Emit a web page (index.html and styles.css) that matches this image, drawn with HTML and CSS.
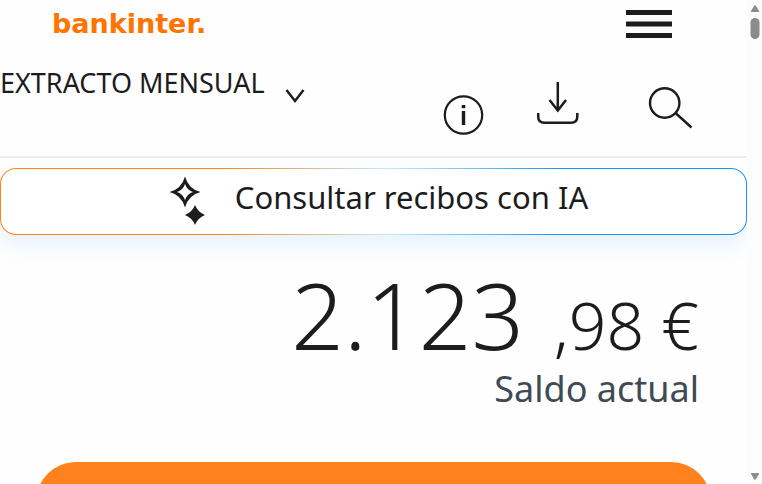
FILE: index.html
```html
<!DOCTYPE html>
<html lang="es">
<head>
<meta charset="utf-8">
<meta name="viewport" content="width=device-width, initial-scale=1">
<title>bankinter</title>
<link rel="stylesheet" href="styles.css">
</head>
<body>
<div class="page">
  <header class="topbar">
    <a class="logo" href="#">bankinter.</a>
    <button class="icon-button" type="button" aria-label="Menú">
      <svg width="46" height="28" viewBox="0 0 46 28" fill="#1b1c1e"><path d="M0 0h46v5H0zM0 11.5h46v5H0zM0 23h46v5H0z"/></svg>
    </button>
  </header>
  <nav class="toolbar">
    <button class="statement" type="button">
      <span>EXTRACTO MENSUAL</span>
      <svg class="chevron" width="20" height="14" viewBox="0 0 20 14" fill="none" stroke="#1b1c1e" stroke-width="2.4"><path d="M1.5 1 10 12 18.5 1"/></svg>
    </button>
    <div class="actions">
      <button class="icon-button" type="button" aria-label="Información">
        <svg width="56" height="56" viewBox="0 0 56 56" fill="none" stroke="#1b1c1e" stroke-width="2.2"><circle cx="27.5" cy="35" r="18.7"/><path d="M27.5 31v14" stroke-width="3.4"/><path d="M27.5 25v3.2" stroke-width="3.6"/></svg>
      </button>
      <button class="icon-button" type="button" aria-label="Descargar">
        <svg width="56" height="56" viewBox="0 0 56 56" fill="none" stroke="#1b1c1e" stroke-width="2.5"><path d="M27.8 2v28M19.5 20l8.3 10.5L36 20"/><path d="M8.2 33v3.5q0 6.300 6.300 6.300h26.500q6.300 0 6.300-6.300V33"/></svg>
      </button>
      <button class="icon-button" type="button" aria-label="Buscar">
        <svg width="74" height="56" viewBox="0 0 74 56" fill="none" stroke="#1b1c1e" stroke-width="2.4"><circle cx="40.7" cy="23" r="14.7"/><path d="M51.5 33 67.5 47.5"/></svg>
      </button>
    </div>
  </nav>
  <main>
    <button class="ask" type="button">
      <svg width="36" height="50" viewBox="0 0 36 50" fill="#1b1c1e"><path fill-rule="evenodd" d="M16 .5Q19.500 13 31.500 16 19.500 19 16 31.500 12.500 19 .5 16 12.500 13 16 .5ZM16 8Q14 14 8 16 14 18 16 24 18 18 24 16 18 14 16 8Z"/><path d="M26 29q2.800 7.200 10 10-7.200 2.800-10 10-2.800-7.200-10-10 7.200-2.800 10-10Z"/></svg>
      <span>Consultar recibos con IA</span>
    </button>
    <section class="balance">
      <p class="amount">2.123 <span class="cents">,98 €</span></p>
      <p class="caption">Saldo actual</p>
    </section>
    <button class="primary" type="button" aria-label="Continuar"></button>
  </main>
</div>
<div class="scrollbar" aria-hidden="true">
  <svg width="10" height="36" viewBox="0 0 10 36" fill="#8b8b8b"><path d="M4 1q1-1.500 2 0L9 6q.5 1-1 1H2Q.5 7 1 6Z"/><rect x="0.5" y="13" width="9" height="21" rx="4.5"/></svg>
  <svg width="10" height="8" viewBox="0 0 10 8" fill="#8b8b8b"><path d="M2 0h6q1.500 0 1 1L6 6q-1 1.500-2 0L1 1Q.5 0 2 0Z"/></svg>
</div>
</body>
</html>
```
FILE: styles.css
```css
* {
  box-sizing: border-box;
}

body {
  margin: 0;
  display: flex;
  height: 100vh;
  overflow: hidden;
  background: #fefefe;
  color: #1b1c1e;
  font-family: "Noto Sans", "Open Sans", sans-serif;
}

button {
  padding: 0;
  border: 0;
  background: none;
  color: inherit;
  font: inherit;
  cursor: pointer;
}

svg {
  display: block;
  flex: none;
}

p {
  margin: 0;
}

.page {
  flex: 1;
  min-width: 0;
  overflow: hidden;
}

.topbar {
  display: flex;
  justify-content: space-between;
  align-items: center;
  height: 48px;
  padding: 0 75px 0 52px;
}

.logo {
  color: #ff7300;
  font: 700 27px/48px "DejaVu Sans", sans-serif;
  text-decoration: none;
}

.toolbar {
  display: flex;
  justify-content: space-between;
  align-items: flex-start;
  height: 110px;
  padding: 0 49px 0 0;
  border-bottom: 2px solid #e9eef5;
}

.statement {
  display: flex;
  align-items: flex-start;
  gap: 20px;
  padding-top: 18px;
  font-size: 27px;
  line-height: 34px;
  white-space: nowrap;
}

.chevron {
  margin-top: 23px;
}

.actions {
  display: flex;
  gap: 38px;
  padding-top: 32px;
}

.ask {
  display: flex;
  justify-content: center;
  align-items: flex-start;
  gap: 30px;
  width: 100%;
  height: 67px;
  margin-top: 10px;
  padding: 7px 0 0 10px;
  border: 1px solid transparent;
  border-radius: 16px;
  background:
    linear-gradient(#fff, #fff) padding-box,
    linear-gradient(90deg, #ff821c 30%, #bfecf2 52%, #1a94f8 75%) border-box;
  box-shadow: 0 10px 20px rgba(26, 148, 248, 0.1);
  font-size: 31px;
  line-height: 42px;
}

.balance {
  padding: 32px 48px 0 0;
  text-align: right;
}

.amount {
  font-size: 92px;
  font-weight: 300;
  line-height: 96px;
}

.cents {
  margin-left: 6px;
  font-size: 66px;
}

.caption {
  color: #3e4a54;
  font-size: 36px;
  line-height: 34px;
}

.primary {
  display: block;
  width: calc(100% - 72px);
  height: 80px;
  margin: 56px auto 0;
  border-radius: 40px;
  background: #ff821c;
}

.scrollbar {
  display: flex;
  flex-direction: column;
  justify-content: space-between;
  align-items: center;
  width: 15px;
  padding: 5px 0 3px;
  background: #fcfcfc;
}
```
